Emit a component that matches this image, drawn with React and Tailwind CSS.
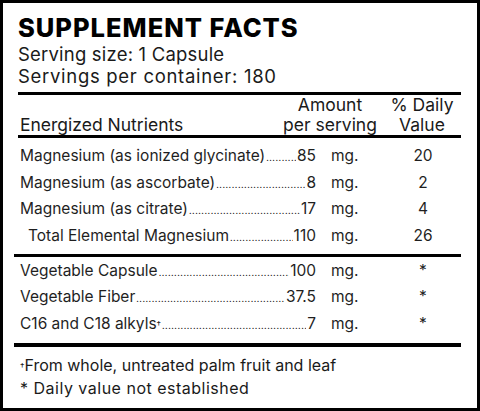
import React from 'react'

const font = { fontFamily: 'Inter, "Open Sans", sans-serif' }

const groupA = [
  { name: 'Magnesium (as ionized glycinate)', amount: '85', dv: '20' },
  { name: 'Magnesium (as ascorbate)', amount: '8', dv: '2' },
  { name: 'Magnesium (as citrate)', amount: '17', dv: '4' },
  { name: 'Total Elemental Magnesium', amount: '110', dv: '26', indent: true },
]

const groupB = [
  { name: 'Vegetable Capsule', amount: '100', dv: '*' },
  { name: 'Vegetable Fiber', amount: '37.5', dv: '*' },
  { name: 'C16 and C18 alkyls', dagger: true, amount: '7', dv: '*' },
]

function Row({ r }) {
  return (
    <div className="flex items-center h-[26.5px] text-[15.5px] text-[#1f1f1f]">
      <div className={`flex items-baseline w-[302px] ${r.indent ? 'pl-[14px]' : 'pl-[6px]'}`}>
        <span className="whitespace-nowrap">
          {r.name}
          {r.dagger && <sup className="text-[9px] relative -top-[1px]">†</sup>}
        </span>
        <span className="flex-1 overflow-hidden whitespace-nowrap text-[9px] tracking-[0.5px] mx-[1px]">
          {'.'.repeat(120)}
        </span>
        <span className="whitespace-nowrap">{r.amount}</span>
      </div>
      <div className="w-[77px] pl-[15px]">mg.</div>
      <div className="w-[60px] text-center">{r.dv}</div>
    </div>
  )
}

export default function App() {
  return (
    <div style={font} className="w-[480px] h-[411px] overflow-hidden bg-white border-[3px] border-black text-[#1a1a1a] pl-[11px] pr-[16px] pt-[10px]">
      <div className="pl-[4px]">
        <div className="text-[25.5px] leading-[30px] font-extrabold tracking-[1px] text-black">SUPPLEMENT FACTS</div>
        <div className="text-[18.5px] leading-[22px] tracking-[0.2px]">Serving size: 1 Capsule</div>
        <div className="text-[18.5px] leading-[22px] tracking-[0.7px]">Servings per container: 180</div>
        <div className="h-[2.5px] bg-black mt-[5px]" />
        <div className="flex items-end text-[17.5px] leading-[20px] whitespace-nowrap">
          <div className="flex-1 pl-[2px]">Energized Nutrients</div>
          <div className="w-[100px] text-center">Amount<br />per serving</div>
          <div className="w-[66px] ml-[9px] mr-[6px] text-center">% Daily<br />Value</div>
        </div>
        <div className="h-[3px] bg-black" />
      </div>
      <div className="pt-[5px] pb-[5px]">
        {groupA.map((r) => <Row key={r.name} r={r} />)}
      </div>
      <div className="h-[3.5px] bg-black" />
      <div className="pb-[6.5px]">
        {groupB.map((r) => <Row key={r.name} r={r} />)}
      </div>
      <div className="h-[3.5px] bg-black" />
      <div className="pt-[7.5px] pl-[6px] text-[16px] leading-[23px]">
        <div><sup className="text-[9px] relative -top-[1px]">†</sup>From whole, untreated palm fruit and leaf</div>
        <div className="tracking-[0.5px]">* Daily value not established</div>
      </div>
    </div>
  )
}
